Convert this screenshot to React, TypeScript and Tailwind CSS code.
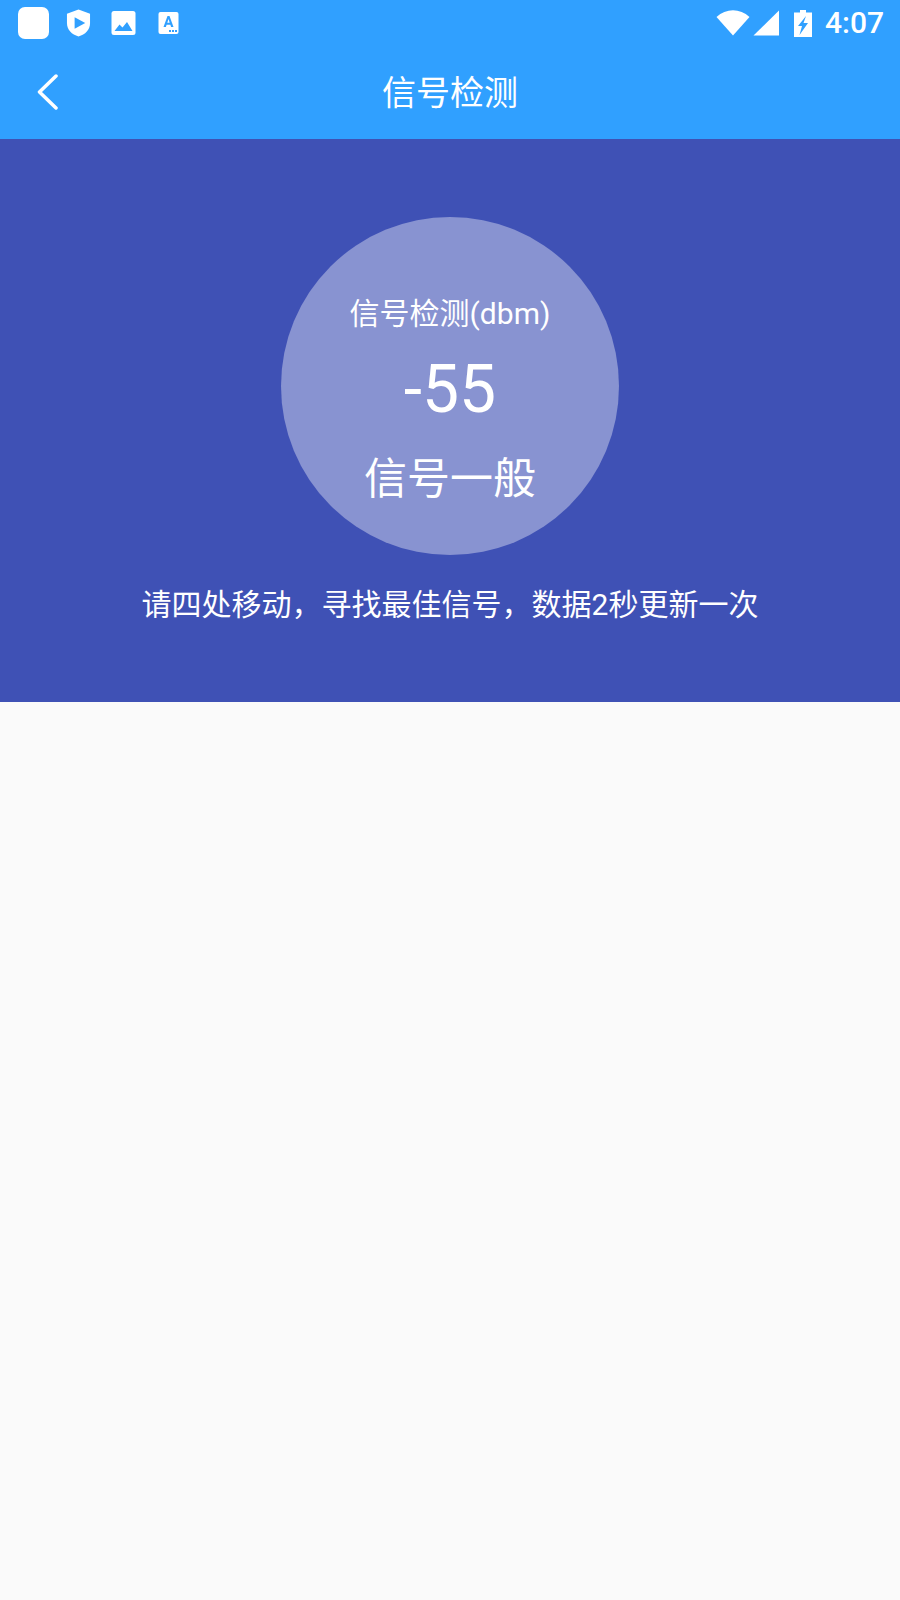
import React from 'react';

const sans = "font-['Roboto','Noto_Sans_CJK_SC',sans-serif]";

function StatusBar() {
  return (
    <div className="flex h-[46px] items-center justify-between pl-[18px] pr-[16px]">
      <div className="flex items-center">
        <div className="h-[32px] w-[31px] rounded-[7px] bg-white" />
        <svg className="ml-[17px] h-[30px] w-[25px]" viewBox="0 0 26 30">
          <path d="M13 1 L25 5.500 V15 C25 22 20 27 13 29 C6 27 1 22 1 15 V5.500 Z" fill="#fff" />
          <path d="M9 9 L20 15 L9 21 Z" fill="#30a0ff" />
        </svg>
        <svg className="ml-[20px] h-[24px] w-[25px]" viewBox="0 0 24 24">
          <rect width="24" height="24" rx="2.500" fill="#fff" />
          <path d="M3 20 L8 13.500 L11 16.500 L15.500 11 L21 20 Z" fill="#30a0ff" />
        </svg>
        <svg className="ml-[22px] h-[22px] w-[21px]" viewBox="0 0 20 22">
          <rect width="20" height="22" rx="2" fill="#fff" />
          <path d="M5 15 L9 4 H11 L15 15 H12.600 L11.900 12.700 H8.100 L7.400 15 Z M8.800 10.700 H11.200 L10 7 Z" fill="#30a0ff" />
          <rect x="10.500" y="18" width="2" height="2" fill="#30a0ff" />
          <rect x="13.500" y="18" width="2" height="2" fill="#30a0ff" />
          <rect x="16.500" y="18" width="2" height="2" fill="#30a0ff" />
        </svg>
      </div>
      <div className="flex items-center">
        <svg className="h-[26px] w-[34px]" viewBox="0 0 34 26">
          <path d="M0.500 7 C10 -2 24 -2 33.500 7 L17 25.500 Z" fill="#fff" />
        </svg>
        <svg className="ml-[3px] h-[26px] w-[27px]" viewBox="0 0 27 26">
          <path d="M26 0.500 V25.500 H0.500 Z" fill="#fff" />
        </svg>
        <svg className="ml-[14px] h-[27px] w-[18px]" viewBox="0 0 18 27">
          <path d="M6 0 H12 V2.500 H18 V27 H0 V2.500 H6 Z" fill="#fff" />
          <path d="M12 6 L4 16 H8 L5.500 25 L14 13 H9.500 Z" fill="#30a0ff" />
        </svg>
        <span className={`ml-[13px] text-[30px] leading-none font-medium text-white ${sans}`}>4:07</span>
      </div>
    </div>
  );
}

export default function App() {
  return (
    <div className={`flex min-h-[1600px] flex-col bg-[#fafafa] ${sans}`}>
      <div className="bg-[#30a0ff]">
        <StatusBar />
        <div className="relative flex h-[93px] items-center justify-center">
          <svg className="absolute left-[37px] top-[28px] h-[36px] w-[21px]" viewBox="0 0 21 36" fill="none">
            <path d="M19 2 L2.500 18 L19 34" stroke="#fff" strokeWidth="3.500" strokeLinecap="round" strokeLinejoin="round" />
          </svg>
          <span className="text-[34px] leading-none text-white">信号检测</span>
        </div>
      </div>

      <div className="flex h-[563px] flex-col items-center bg-[#3f51b5] pt-[78px] text-white">
        <div className="flex h-[338px] w-[338px] flex-col items-center rounded-full bg-[#8893d1]">
          <span className="mt-[79px] text-[30px] leading-[36px]">信号检测(dbm)</span>
          <span className="mt-[23px] text-[66px] leading-[70px]">-55</span>
          <span className="mt-[28px] text-[43px] leading-[52px]">信号一般</span>
        </div>
        <p className="mt-[30px] text-[30px] leading-[40px]">请四处移动，寻找最佳信号，数据2秒更新一次</p>
      </div>
    </div>
  );
}
